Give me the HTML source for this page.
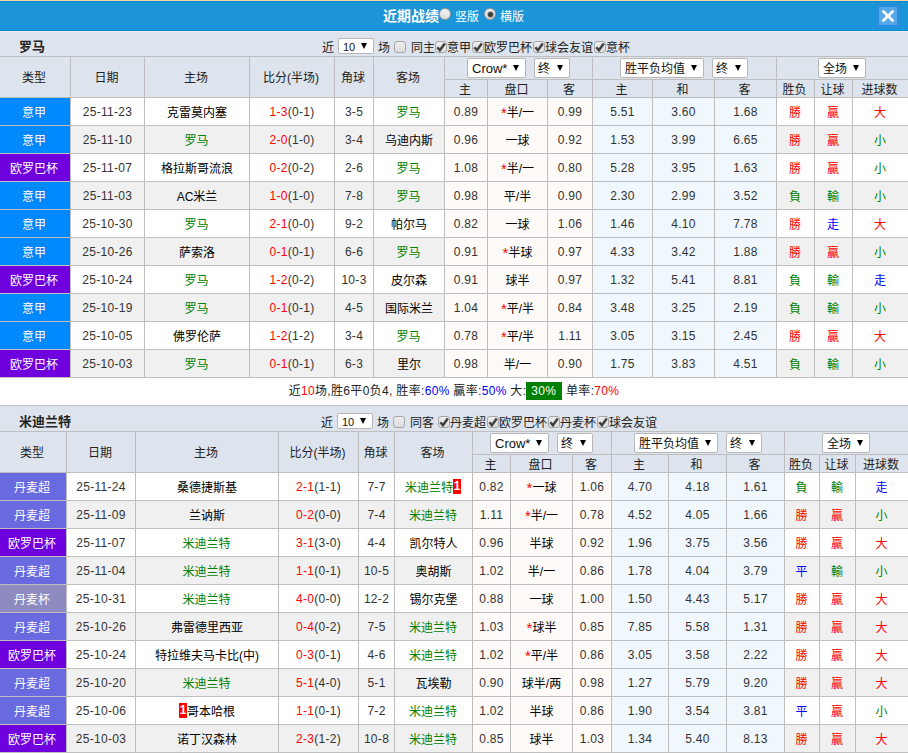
<!DOCTYPE html>
<html lang="zh-CN"><head><meta charset="utf-8"><title>近期战绩</title>
<style>
*{margin:0;padding:0;box-sizing:border-box}
html,body{width:908px;height:755px;overflow:hidden;background:#fff}
body{font-family:"Liberation Sans","Noto Sans CJK SC",sans-serif;font-size:12px;color:#000;position:relative}
.top{position:absolute;left:0;top:0;width:908px;height:31px;background:#1b95d7;border-top:1px solid #f8d79a;box-shadow:inset 0 1px 0 #0d8ad6,inset 0 -1px 0 #0d8ad6}
.top .tt{position:absolute;left:383px;top:6px;font-size:14px;font-weight:bold;color:#fff;line-height:18px;letter-spacing:0}
.top .l1{position:absolute;left:455px;top:8px;color:#fff;line-height:16px}
.top .l2{position:absolute;left:500px;top:8px;color:#fff;line-height:16px}
.rd{position:absolute;width:12px;height:12px;border-radius:50%;border:1px solid #9a9a9a;background:linear-gradient(#f4f4f4,#dcdcdc)}
.rd.on:after{content:"";position:absolute;left:2.5px;top:2.5px;width:5px;height:5px;border-radius:50%;background:#3c3c3c;box-shadow:0 0 0 1px #b0b0b0}
.cls{position:absolute;left:877px;top:4px;width:22px;height:22px;background:#56a8ea;border:2px solid #2b8be1}
.sec{position:absolute;left:0;width:908px;height:26px;background:#dde4ee;border-bottom:1px solid #bebebe}
.sec b{position:absolute;left:19px;top:7px;font-size:13px;line-height:18px;color:#222}
.ft{position:absolute;top:8px;line-height:18px;color:#222;white-space:nowrap}
.cb{position:absolute;top:10px;width:12px;height:12px;border:1px solid #a6a6a6;border-radius:3px;background:linear-gradient(#ededed,#dcdcdc)}
.cb svg{position:absolute;left:-1px;top:-1px}
.sel{position:absolute;height:20px;background:#fff;border:1px solid #b8b8b8;border-radius:2px;text-align:left}
.sel .st{position:absolute;left:4px;top:1px;line-height:18px;font-size:12px;color:#111;white-space:nowrap}
.sel.lat .st{font-size:13px}
.sel .ar{position:absolute;right:6px;top:5.5px;width:0;height:0;border-left:3.5px solid transparent;border-right:3.5px solid transparent;border-top:6px solid #000}
.sel.m2 .st{left:3px}
.sel.s10{height:16px}
.sel.s10 .st{line-height:15px;left:4px;font-size:11px;top:0.5px}
.sel.s10 .ar{top:4px;right:6px}
table{position:absolute;left:0;width:908px;border-collapse:separate;border-spacing:0;table-layout:fixed}
td,th{border-right:1px solid #bebebe;border-bottom:1px solid #bebebe;text-align:center;font-weight:normal;white-space:nowrap;overflow:hidden;padding:0}
td:last-child,th:last-child{border-right:0}
th{background:#dde4ee;color:#222;padding-right:2px}
tr.h1 th{height:23px}
tr.h1 th[rowspan]{height:41px;line-height:38px;padding-top:2px}
tr.h2 th{height:18px;line-height:13px;padding-top:4px}
td{height:28px;line-height:23px;padding-top:4px;background:#fff}
tr.a td{background:#f0f0f0}
td.lg{color:#fff;padding-right:2px}
td.d{color:#333;padding-top:2px;line-height:25px;letter-spacing:.3px}
td.o,tr.a td.o{background:#fdfaf7}
td.e,tr.a td.e{background:#f0f8fd}
.g{color:#008000}.r{color:#f00}.b{color:#00f}
td.g{color:#008000}td.r{color:#f00}td.b{color:#00f}
.r.st{font-size:15px;line-height:0;position:relative;top:1px}
td.r,td.b,td.g{padding-right:1px}
.rc{display:inline-block;background:#f00;color:#fff;font-weight:bold;width:8px;height:15px;line-height:15px;font-size:12px;vertical-align:middle;text-align:center;margin-top:-4px}
.sum{position:absolute;left:0;top:378px;width:908px;height:28px;line-height:27px;background:#fff;border-bottom:1px solid #bebebe;text-align:center;color:#222;white-space:nowrap;letter-spacing:.33px}
.sum .pc{display:inline-block;background:#008000;color:#fff;height:18px;line-height:18px;padding:0 6px 0 5px;vertical-align:middle;margin-top:-2px}
</style></head><body>
<div class="top"><span class="tt">近期战绩</span><span class="rd" style="left:439px;top:7px"></span><span class="l1">竖版</span><span class="rd on" style="left:484px;top:7px"></span><span class="l2">横版</span>
<span class="cls"><svg width="18" height="18" viewBox="0 0 18 18" style="display:block"><path d="M3.6 3.8 L14.4 14.2 M14.4 3.8 L3.6 14.2" stroke="#fff" stroke-width="2.7" fill="none"/></svg></span></div>
<div class="sec" style="top:31px;box-shadow:inset 0 1px 0 #e9edf3"><b>罗马</b><span class="ft" style="left:322px">近</span><span class="sel s10" style="width:36px;position:absolute;left:338px;top:7px"><span class="st">10</span><span class="ar"></span></span><span class="ft" style="left:378px">场</span><span class="cb" style="left:394px"></span><span class="ft" style="left:411px">同主</span><span class="cb" style="left:435px"><svg viewBox="0 0 12 12" width="12" height="12"><path d="M2.4 6.3 L4.9 9.2 L9.8 2.6" fill="none" stroke="#404040" stroke-width="2.5"/></svg></span><span class="ft" style="left:447px">意甲</span><span class="cb" style="left:472px"><svg viewBox="0 0 12 12" width="12" height="12"><path d="M2.4 6.3 L4.9 9.2 L9.8 2.6" fill="none" stroke="#404040" stroke-width="2.5"/></svg></span><span class="ft" style="left:484px">欧罗巴杯</span><span class="cb" style="left:533px"><svg viewBox="0 0 12 12" width="12" height="12"><path d="M2.4 6.3 L4.9 9.2 L9.8 2.6" fill="none" stroke="#404040" stroke-width="2.5"/></svg></span><span class="ft" style="left:545px">球会友谊</span><span class="cb" style="left:594px"><svg viewBox="0 0 12 12" width="12" height="12"><path d="M2.4 6.3 L4.9 9.2 L9.8 2.6" fill="none" stroke="#404040" stroke-width="2.5"/></svg></span><span class="ft" style="left:606px">意杯</span></div>
<table style="top:57px"><colgroup><col style="width:71px"><col style="width:74px"><col style="width:105px"><col style="width:85px"><col style="width:39px"><col style="width:71px"><col style="width:43px"><col style="width:60px"><col style="width:45px"><col style="width:60px"><col style="width:62px"><col style="width:62px"><col style="width:38px"><col style="width:38px"><col style="width:55px"></colgroup>
<tr class="h1"><th rowspan="2">类型</th><th rowspan="2">日期</th><th rowspan="2">主场</th><th rowspan="2">比分(半场)</th><th rowspan="2">角球</th><th rowspan="2">客场</th><th colspan="3"></th><th colspan="3"></th><th colspan="3"></th></tr>
<tr class="h2"><th>主</th><th>盘口</th><th>客</th><th>主</th><th>和</th><th>客</th><th>胜负</th><th>让球</th><th>进球数</th></tr>
<tr><td class="lg" style="background:#0088ff">意甲</td><td class="d">25-11-23</td><td>克雷莫内塞</td><td class="d"><span class="r">1-3</span>(0-1)</td><td class="d">3-5</td><td class="g">罗马</td><td class="o d">0.89</td><td class="o"><span class="r st">*</span>半/一</td><td class="o d">0.99</td><td class="e d">5.51</td><td class="e d">3.60</td><td class="e d">1.68</td><td class="r">勝</td><td class="r">贏</td><td class="r">大</td></tr>
<tr class="a"><td class="lg" style="background:#0088ff">意甲</td><td class="d">25-11-10</td><td class="g">罗马</td><td class="d"><span class="r">2-0</span>(1-0)</td><td class="d">3-4</td><td>乌迪内斯</td><td class="o d">0.96</td><td class="o">一球</td><td class="o d">0.92</td><td class="e d">1.53</td><td class="e d">3.99</td><td class="e d">6.65</td><td class="r">勝</td><td class="r">贏</td><td class="g">小</td></tr>
<tr><td class="lg" style="background:#6f00dd">欧罗巴杯</td><td class="d">25-11-07</td><td>格拉斯哥流浪</td><td class="d"><span class="r">0-2</span>(0-2)</td><td class="d">2-6</td><td class="g">罗马</td><td class="o d">1.08</td><td class="o"><span class="r st">*</span>半/一</td><td class="o d">0.80</td><td class="e d">5.28</td><td class="e d">3.95</td><td class="e d">1.63</td><td class="r">勝</td><td class="r">贏</td><td class="g">小</td></tr>
<tr class="a"><td class="lg" style="background:#0088ff">意甲</td><td class="d">25-11-03</td><td>AC米兰</td><td class="d"><span class="r">1-0</span>(1-0)</td><td class="d">7-8</td><td class="g">罗马</td><td class="o d">0.98</td><td class="o">平/半</td><td class="o d">0.90</td><td class="e d">2.30</td><td class="e d">2.99</td><td class="e d">3.52</td><td class="g">負</td><td class="g">輸</td><td class="g">小</td></tr>
<tr><td class="lg" style="background:#0088ff">意甲</td><td class="d">25-10-30</td><td class="g">罗马</td><td class="d"><span class="r">2-1</span>(0-0)</td><td class="d">9-2</td><td>帕尔马</td><td class="o d">0.82</td><td class="o">一球</td><td class="o d">1.06</td><td class="e d">1.46</td><td class="e d">4.10</td><td class="e d">7.78</td><td class="r">勝</td><td class="b">走</td><td class="r">大</td></tr>
<tr class="a"><td class="lg" style="background:#0088ff">意甲</td><td class="d">25-10-26</td><td>萨索洛</td><td class="d"><span class="r">0-1</span>(0-1)</td><td class="d">6-6</td><td class="g">罗马</td><td class="o d">0.91</td><td class="o"><span class="r st">*</span>半球</td><td class="o d">0.97</td><td class="e d">4.33</td><td class="e d">3.42</td><td class="e d">1.88</td><td class="r">勝</td><td class="r">贏</td><td class="g">小</td></tr>
<tr><td class="lg" style="background:#6f00dd">欧罗巴杯</td><td class="d">25-10-24</td><td class="g">罗马</td><td class="d"><span class="r">1-2</span>(0-2)</td><td class="d">10-3</td><td>皮尔森</td><td class="o d">0.91</td><td class="o">球半</td><td class="o d">0.97</td><td class="e d">1.32</td><td class="e d">5.41</td><td class="e d">8.81</td><td class="g">負</td><td class="g">輸</td><td class="b">走</td></tr>
<tr class="a"><td class="lg" style="background:#0088ff">意甲</td><td class="d">25-10-19</td><td class="g">罗马</td><td class="d"><span class="r">0-1</span>(0-1)</td><td class="d">4-5</td><td>国际米兰</td><td class="o d">1.04</td><td class="o"><span class="r st">*</span>平/半</td><td class="o d">0.84</td><td class="e d">3.48</td><td class="e d">3.25</td><td class="e d">2.19</td><td class="g">負</td><td class="g">輸</td><td class="g">小</td></tr>
<tr><td class="lg" style="background:#0088ff">意甲</td><td class="d">25-10-05</td><td>佛罗伦萨</td><td class="d"><span class="r">1-2</span>(1-2)</td><td class="d">3-4</td><td class="g">罗马</td><td class="o d">0.78</td><td class="o"><span class="r st">*</span>平/半</td><td class="o d">1.11</td><td class="e d">3.05</td><td class="e d">3.15</td><td class="e d">2.45</td><td class="r">勝</td><td class="r">贏</td><td class="r">大</td></tr>
<tr class="a"><td class="lg" style="background:#6f00dd">欧罗巴杯</td><td class="d">25-10-03</td><td class="g">罗马</td><td class="d"><span class="r">0-1</span>(0-1)</td><td class="d">6-3</td><td>里尔</td><td class="o d">0.98</td><td class="o">半/一</td><td class="o d">0.90</td><td class="e d">1.75</td><td class="e d">3.83</td><td class="e d">4.51</td><td class="g">負</td><td class="g">輸</td><td class="g">小</td></tr>
</table>
<span class="sel lat" style="width:59px;position:absolute;left:467px;top:58px"><span class="st">Crow*</span><span class="ar"></span></span><span class="sel m2" style="width:36px;position:absolute;left:534px;top:58px"><span class="st">终</span><span class="ar"></span></span><span class="sel " style="width:84px;position:absolute;left:620px;top:58px"><span class="st">胜平负均值</span><span class="ar"></span></span><span class="sel m2" style="width:36px;position:absolute;left:712px;top:58px"><span class="st">终</span><span class="ar"></span></span><span class="sel " style="width:48px;position:absolute;left:818px;top:58px"><span class="st">全场</span><span class="ar"></span></span>
<div class="sum">近<span class="r">10</span>场,胜6平0负4, 胜率:<span class="b">60%</span> 贏率:<span class="b">50%</span> 大:<span class="pc">30%</span> 单率:<span class="r">70%</span></div>
<div class="sec" style="top:406px"><b>米迪兰特</b><span class="ft" style="left:321px">近</span><span class="sel s10" style="width:36px;position:absolute;left:337px;top:7px"><span class="st">10</span><span class="ar"></span></span><span class="ft" style="left:377px">场</span><span class="cb" style="left:393px"></span><span class="ft" style="left:410px">同客</span><span class="cb" style="left:438px"><svg viewBox="0 0 12 12" width="12" height="12"><path d="M2.4 6.3 L4.9 9.2 L9.8 2.6" fill="none" stroke="#404040" stroke-width="2.5"/></svg></span><span class="ft" style="left:450px">丹麦超</span><span class="cb" style="left:487px"><svg viewBox="0 0 12 12" width="12" height="12"><path d="M2.4 6.3 L4.9 9.2 L9.8 2.6" fill="none" stroke="#404040" stroke-width="2.5"/></svg></span><span class="ft" style="left:499px">欧罗巴杯</span><span class="cb" style="left:548px"><svg viewBox="0 0 12 12" width="12" height="12"><path d="M2.4 6.3 L4.9 9.2 L9.8 2.6" fill="none" stroke="#404040" stroke-width="2.5"/></svg></span><span class="ft" style="left:560px">丹麦杯</span><span class="cb" style="left:597px"><svg viewBox="0 0 12 12" width="12" height="12"><path d="M2.4 6.3 L4.9 9.2 L9.8 2.6" fill="none" stroke="#404040" stroke-width="2.5"/></svg></span><span class="ft" style="left:609px">球会友谊</span></div>
<table style="top:432px"><colgroup><col style="width:67px"><col style="width:69px"><col style="width:143px"><col style="width:80px"><col style="width:36px"><col style="width:78px"><col style="width:38px"><col style="width:62px"><col style="width:39px"><col style="width:57px"><col style="width:58px"><col style="width:58px"><col style="width:35px"><col style="width:36px"><col style="width:52px"></colgroup>
<tr class="h1"><th rowspan="2">类型</th><th rowspan="2">日期</th><th rowspan="2">主场</th><th rowspan="2">比分(半场)</th><th rowspan="2">角球</th><th rowspan="2">客场</th><th colspan="3"></th><th colspan="3"></th><th colspan="3"></th></tr>
<tr class="h2"><th>主</th><th>盘口</th><th>客</th><th>主</th><th>和</th><th>客</th><th>胜负</th><th>让球</th><th>进球数</th></tr>
<tr><td class="lg" style="background:#6969e0">丹麦超</td><td class="d">25-11-24</td><td>桑德捷斯基</td><td class="d"><span class="r">2-1</span>(1-1)</td><td class="d">7-7</td><td class="g">米迪兰特<span class="rc">1</span></td><td class="o d">0.82</td><td class="o"><span class="r st">*</span>一球</td><td class="o d">1.06</td><td class="e d">4.70</td><td class="e d">4.18</td><td class="e d">1.61</td><td class="g">負</td><td class="g">輸</td><td class="b">走</td></tr>
<tr class="a"><td class="lg" style="background:#6969e0">丹麦超</td><td class="d">25-11-09</td><td>兰讷斯</td><td class="d"><span class="r">0-2</span>(0-0)</td><td class="d">7-4</td><td class="g">米迪兰特</td><td class="o d">1.11</td><td class="o"><span class="r st">*</span>半/一</td><td class="o d">0.78</td><td class="e d">4.52</td><td class="e d">4.05</td><td class="e d">1.66</td><td class="r">勝</td><td class="r">贏</td><td class="g">小</td></tr>
<tr><td class="lg" style="background:#6f00dd">欧罗巴杯</td><td class="d">25-11-07</td><td class="g">米迪兰特</td><td class="d"><span class="r">3-1</span>(3-0)</td><td class="d">4-4</td><td>凯尔特人</td><td class="o d">0.96</td><td class="o">半球</td><td class="o d">0.92</td><td class="e d">1.96</td><td class="e d">3.75</td><td class="e d">3.56</td><td class="r">勝</td><td class="r">贏</td><td class="r">大</td></tr>
<tr class="a"><td class="lg" style="background:#6969e0">丹麦超</td><td class="d">25-11-04</td><td class="g">米迪兰特</td><td class="d"><span class="r">1-1</span>(0-1)</td><td class="d">10-5</td><td>奥胡斯</td><td class="o d">1.02</td><td class="o">半/一</td><td class="o d">0.86</td><td class="e d">1.78</td><td class="e d">4.04</td><td class="e d">3.79</td><td class="b">平</td><td class="g">輸</td><td class="g">小</td></tr>
<tr><td class="lg" style="background:#8d8bc0">丹麦杯</td><td class="d">25-10-31</td><td class="g">米迪兰特</td><td class="d"><span class="r">4-0</span>(0-0)</td><td class="d">12-2</td><td>锡尔克堡</td><td class="o d">0.88</td><td class="o">一球</td><td class="o d">1.00</td><td class="e d">1.50</td><td class="e d">4.43</td><td class="e d">5.17</td><td class="r">勝</td><td class="r">贏</td><td class="r">大</td></tr>
<tr class="a"><td class="lg" style="background:#6969e0">丹麦超</td><td class="d">25-10-26</td><td>弗雷德里西亚</td><td class="d"><span class="r">0-4</span>(0-2)</td><td class="d">7-5</td><td class="g">米迪兰特</td><td class="o d">1.03</td><td class="o"><span class="r st">*</span>球半</td><td class="o d">0.85</td><td class="e d">7.85</td><td class="e d">5.58</td><td class="e d">1.31</td><td class="r">勝</td><td class="r">贏</td><td class="r">大</td></tr>
<tr><td class="lg" style="background:#6f00dd">欧罗巴杯</td><td class="d">25-10-24</td><td>特拉维夫马卡比(中)</td><td class="d"><span class="r">0-3</span>(0-1)</td><td class="d">4-6</td><td class="g">米迪兰特</td><td class="o d">1.02</td><td class="o"><span class="r st">*</span>平/半</td><td class="o d">0.86</td><td class="e d">3.05</td><td class="e d">3.58</td><td class="e d">2.22</td><td class="r">勝</td><td class="r">贏</td><td class="r">大</td></tr>
<tr class="a"><td class="lg" style="background:#6969e0">丹麦超</td><td class="d">25-10-20</td><td class="g">米迪兰特</td><td class="d"><span class="r">5-1</span>(4-0)</td><td class="d">5-1</td><td>瓦埃勒</td><td class="o d">0.90</td><td class="o">球半/两</td><td class="o d">0.98</td><td class="e d">1.27</td><td class="e d">5.79</td><td class="e d">9.20</td><td class="r">勝</td><td class="r">贏</td><td class="r">大</td></tr>
<tr><td class="lg" style="background:#6969e0">丹麦超</td><td class="d">25-10-06</td><td><span class="rc">1</span>哥本哈根</td><td class="d"><span class="r">1-1</span>(0-1)</td><td class="d">7-2</td><td class="g">米迪兰特</td><td class="o d">1.02</td><td class="o">半球</td><td class="o d">0.86</td><td class="e d">1.90</td><td class="e d">3.54</td><td class="e d">3.81</td><td class="b">平</td><td class="r">贏</td><td class="g">小</td></tr>
<tr class="a"><td class="lg" style="background:#6f00dd">欧罗巴杯</td><td class="d">25-10-03</td><td>诺丁汉森林</td><td class="d"><span class="r">2-3</span>(1-2)</td><td class="d">10-8</td><td class="g">米迪兰特</td><td class="o d">0.85</td><td class="o">球半</td><td class="o d">1.03</td><td class="e d">1.34</td><td class="e d">5.40</td><td class="e d">8.13</td><td class="r">勝</td><td class="r">贏</td><td class="r">大</td></tr>
</table>
<span class="sel lat" style="width:59px;position:absolute;left:490px;top:433px"><span class="st">Crow*</span><span class="ar"></span></span><span class="sel m2" style="width:36px;position:absolute;left:557px;top:433px"><span class="st">终</span><span class="ar"></span></span><span class="sel " style="width:84px;position:absolute;left:634px;top:433px"><span class="st">胜平负均值</span><span class="ar"></span></span><span class="sel m2" style="width:36px;position:absolute;left:726px;top:433px"><span class="st">终</span><span class="ar"></span></span><span class="sel " style="width:48px;position:absolute;left:822px;top:433px"><span class="st">全场</span><span class="ar"></span></span>
</body></html>
